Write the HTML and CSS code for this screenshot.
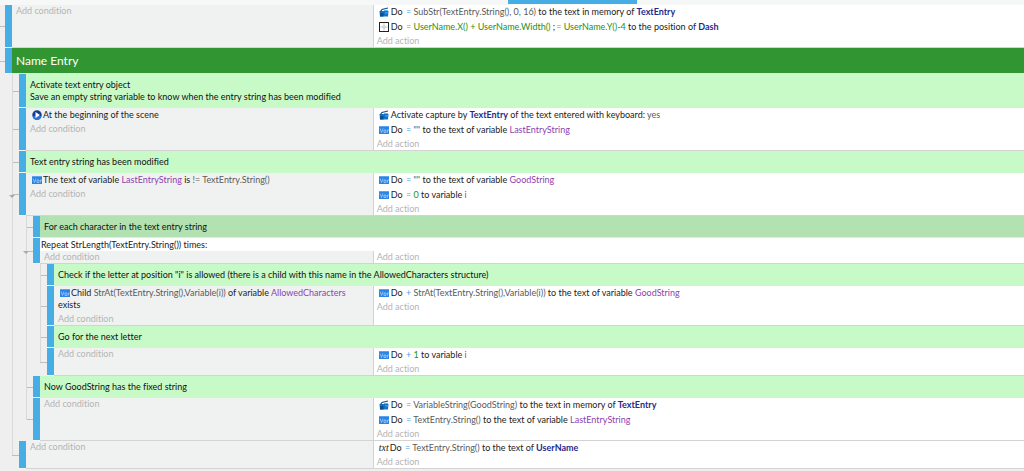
FILE: index.html
```
<!DOCTYPE html>
<html lang="en">
<head>
<meta charset="utf-8">
<title>Events sheet</title>
<link rel="stylesheet" href="styles.css">
</head>
<body>
<svg class="sprites" aria-hidden="true">
  <symbol id="capture" viewBox="0 0 20 20">
    <path d="M1 8h18l-1 11H2z" fill="#1272c4"/>
    <path d="M2 12h7v7H2z" fill="#0b4f96"/>
    <path d="M12 10h6v3h-6z" fill="#2f9be8"/>
    <path d="M3 9l3-4 12-3" fill="none" stroke="#1a4f8a" stroke-width="2.4"/>
    <path d="M10 7h8" stroke="#69b5ee" stroke-width="2"/>
  </symbol>
  <symbol id="position" viewBox="0 0 20 20">
    <rect x="1" y="1" width="18" height="18" fill="#fff" stroke="#222" stroke-width="2"/>
    <path d="M10 3v14M3 10h14" stroke="#a8a8a8" stroke-width="2" stroke-dasharray="2 1"/>
  </symbol>
  <symbol id="variable" viewBox="0 0 20 20">
    <rect x="0" y="2" width="20" height="16" rx="1" fill="#2b83e2"/>
    <path d="M0 3h20" stroke="#5ba5f0" stroke-width="2"/>
    <path d="M2 7l3 8 3-8M14 15v-5h-4v5h4M17 15V10h3" fill="none" stroke="#b5d6fa" stroke-width="1.4"/>
  </symbol>
  <symbol id="start" viewBox="0 0 20 20">
    <circle cx="10" cy="10" r="10" fill="#8fa6cf"/>
    <circle cx="10" cy="10" r="9" fill="#153a8c"/>
    <path d="M2 12a8 8 0 0 0 16 0z" fill="#2f73d8"/>
    <path d="M7 4l9 6-9 6z" fill="#fff"/>
  </symbol>
</svg>
<header class="topbar"><span class="tab"></span></header>
<main>
<ul class="events root">
  <li>
    <div class="row"><span class="handle"></span>
      <div class="event">
        <div class="conditions"><button>Add condition</button></div>
        <div class="actions">
          <p><svg><use href="#capture"/></svg>Do <i class="op">=</i> <span class="expr">SubStr(TextEntry.String(), 0, 16)</span> to the text in memory of <b>TextEntry</b></p>
          <p><svg><use href="#position"/></svg>Do <i class="op">=</i> <span class="num">UserName.X() + UserName.Width()</span> ;<i class="op">=</i> <span class="num">UserName.Y()-4</span> to the position of <b>Dash</b></p>
          <button>Add action</button>
        </div>
      </div>
    </div>
  </li>
  <li>
    <div class="row"><span class="handle"></span><h1 class="group">Name Entry</h1></div>
    <ul class="events level1">
      <li><div class="row"><span class="handle"></span><p class="comment">Activate text entry object<br>Save an empty string variable to know when the entry string has been modified</p></div></li>
      <li>
        <div class="row"><span class="handle"></span>
          <div class="event">
            <div class="conditions"><p><svg><use href="#start"/></svg>At the beginning of the scene</p><button>Add condition</button></div>
            <div class="actions">
              <p><svg><use href="#capture"/></svg>Activate capture by <b>TextEntry</b> of the text entered with keyboard: <span class="expr">yes</span></p>
              <p><svg><use href="#variable"/></svg>Do <i class="op">=</i> <span class="expr">""</span> to the text of variable <span class="var">LastEntryString</span></p>
              <button>Add action</button>
            </div>
          </div>
        </div>
      </li>
      <li><div class="row"><span class="handle"></span><p class="comment">Text entry string has been modified</p></div></li>
      <li>
        <div class="row open"><span class="handle"></span>
          <div class="event">
            <div class="conditions"><p><svg><use href="#variable"/></svg>The text of variable <span class="var">LastEntryString</span> is <span class="expr">!= TextEntry.String()</span></p><button>Add condition</button></div>
            <div class="actions">
              <p><svg><use href="#variable"/></svg>Do <i class="op">=</i> <span class="expr">""</span> to the text of variable <span class="var">GoodString</span></p>
              <p><svg><use href="#variable"/></svg>Do <i class="op">=</i> <span class="num">0</span> to variable <span class="var">i</span></p>
              <button>Add action</button>
            </div>
          </div>
        </div>
        <ul class="events level2">
          <li><div class="row"><span class="handle"></span><p class="comment selected">For each character in the text entry string</p></div></li>
          <li>
            <div class="row open"><span class="handle"></span>
              <div class="event">
                <p class="repeat">Repeat StrLength(TextEntry.String()) times:</p>
                <div class="conditions"><button>Add condition</button></div>
                <div class="actions"><button>Add action</button></div>
              </div>
            </div>
            <ul class="events level3">
              <li><div class="row"><span class="handle"></span><p class="comment">Check if the letter at position "i" is allowed (there is a child with this name in the AllowedCharacters structure)</p></div></li>
              <li>
                <div class="row"><span class="handle"></span>
                  <div class="event">
                    <div class="conditions"><p><svg><use href="#variable"/></svg>Child <span class="expr">StrAt(TextEntry.String(),Variable(i))</span> of variable <span class="var">AllowedCharacters</span> exists</p><button>Add condition</button></div>
                    <div class="actions">
                      <p><svg><use href="#variable"/></svg>Do <i class="op">+</i> <span class="expr">StrAt(TextEntry.String(),Variable(i))</span> to the text of variable <span class="var">GoodString</span></p>
                      <button>Add action</button>
                    </div>
                  </div>
                </div>
              </li>
              <li><div class="row"><span class="handle"></span><p class="comment">Go for the next letter</p></div></li>
              <li>
                <div class="row"><span class="handle"></span>
                  <div class="event">
                    <div class="conditions"><button>Add condition</button></div>
                    <div class="actions">
                      <p><svg><use href="#variable"/></svg>Do <i class="op">+</i> <span class="num">1</span> to variable <span class="var">i</span></p>
                      <button>Add action</button>
                    </div>
                  </div>
                </div>
              </li>
            </ul>
          </li>
          <li><div class="row"><span class="handle"></span><p class="comment">Now GoodString has the fixed string</p></div></li>
          <li>
            <div class="row"><span class="handle"></span>
              <div class="event">
                <div class="conditions"><button>Add condition</button></div>
                <div class="actions">
                  <p><svg><use href="#capture"/></svg>Do <i class="op">=</i> <span class="expr">VariableString(GoodString)</span> to the text in memory of <b>TextEntry</b></p>
                  <p><svg><use href="#variable"/></svg>Do <i class="op">=</i> <span class="expr">TextEntry.String()</span> to the text of variable <span class="var">LastEntryString</span></p>
                  <button>Add action</button>
                </div>
              </div>
            </div>
          </li>
        </ul>
      </li>
      <li>
        <div class="row"><span class="handle"></span>
          <div class="event">
            <div class="conditions"><button>Add condition</button></div>
            <div class="actions">
              <p><span class="txt">txt</span>Do <i class="op">=</i> <span class="expr">TextEntry.String()</span> to the text of <b>UserName</b></p>
              <button>Add action</button>
            </div>
          </div>
        </div>
      </li>
    </ul>
  </li>
</ul>
</main>
</body>
</html>
```
FILE: styles.css
```
* { box-sizing: border-box; }
body {
  margin: 0;
  background: #efefef;
  color: #222;
  font: 9px/12px Lato, "Open Sans", sans-serif;
  font-variant-ligatures: none;
}
p, h1, ul { margin: 0; padding: 0; }
.sprites { display: none; }

.topbar { height: 5px; background: #f5f8f7; }
.tab {
  display: block;
  height: 4px;
  width: 12.6%;
  margin-left: 49.6%;
  background: #47aee5;
}

/* Tree: every level shifts right and draws its own guide line */
.events { list-style: none; }
.root { --start: 12px; --gutter: 5px; }
.level1 { --start: 26px; --gutter: 7px; margin-left: 12px; }
.level2 { --start: 40px; margin-left: 14px; }
.level3 { --start: 54px; margin-left: 14px; }
.events > li { position: relative; }
.events:not(.root) > li::before {
  content: "";
  position: absolute;
  top: 0;
  bottom: 0;
  left: 0;
  border-left: 1px solid #d9d9d9;
}
.events > li:last-child::before { bottom: 50%; }

.row { display: grid; grid-template-columns: var(--gutter) 7px minmax(0, 1fr); }
.row::before {
  content: "";
  align-self: center;
  height: 1px;
  background: #bdbdbd;
}
.row.open { position: relative; }
.row.open::after {
  content: "";
  position: absolute;
  left: -3px;
  top: 50%;
  border: 3px solid transparent;
  border-top-color: #aaa;
  border-bottom: 0;
}
.handle {
  background: #47aee5;
  border-bottom: 1px solid #f7f7f7;
}

.group {
  padding: 0 4px;
  background: #319632;
  border-bottom: 1px solid #d4f2d4;
  color: #fff;
  font-size: 12px;
  font-weight: 400;
  line-height: 25px;
}
.comment {
  padding: 5px 4px 4px;
  background: #c7fac7;
  color: #111;
}
.comment:not(.selected) { border-bottom: 1px solid #c7fac7; }
.selected {
  background: #b2e1b2;
  border-bottom: 1px solid #d4f5d4;
}

.event {
  display: grid;
  grid-template-columns: calc(36.4vw - var(--start)) minmax(0, 1fr);
  border-bottom: 1px solid #d3d3d3;
  background: #fff;
}
.repeat { grid-column: 1 / -1; padding-left: 1px; line-height: 13px; }
.conditions { padding: 0 8px 0 4px; background: #f0f2f1; }
.actions { padding-left: 3px; border-left: 1px solid #d3d3d3; }
.conditions p, .actions p { padding: 1px 0 2px; }

button {
  display: block;
  padding: 0;
  border: 0;
  background: none;
  color: #b4b4b4;
  font: inherit;
  font-variant-ligatures: none;
}
svg, .txt {
  display: inline-block;
  width: 10px;
  height: 10px;
  margin: 0 2px;
  vertical-align: -2px;
}
.conditions svg { margin-right: 1px; }
.txt {
  width: auto;
  margin-right: 1px;
  font: italic 10px/10px "Liberation Serif", serif;
  vertical-align: baseline;
}
.op { margin-left: 1px; color: #3f9be8; font-style: normal; }
.expr { color: #5a5a5a; }
.num { color: #19911c; }
.var { color: #8e3fae; }
b { color: #1f2b8c; font-weight: 700; }
```
